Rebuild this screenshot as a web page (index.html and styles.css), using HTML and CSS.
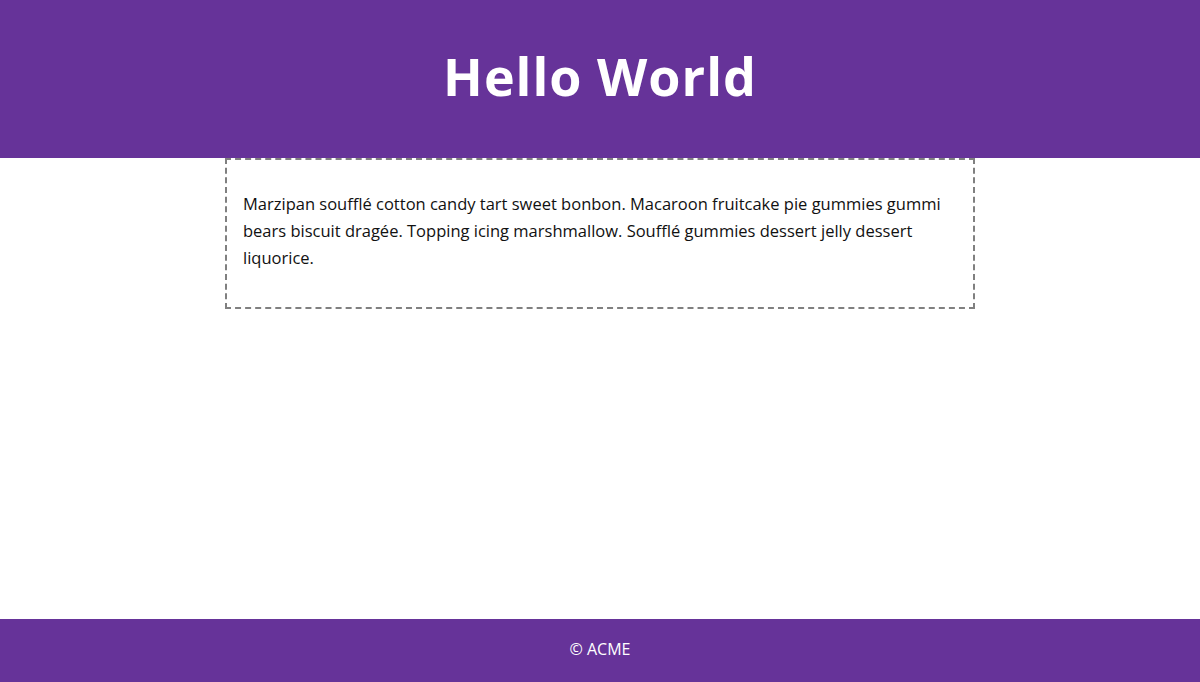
FILE: index.html
```html
<!DOCTYPE html>
<html lang="en">
<head>
<meta charset="utf-8">
<title>Hello World</title>
<link rel="stylesheet" href="styles.css">
</head>
<body>
<div class="page">
  <header class="site-header">
    <h1 class="title">Hello World</h1>
  </header>
  <main class="main">
    <div class="card">
      <p class="text">Marzipan soufflé cotton candy tart sweet bonbon. Macaroon fruitcake pie gummies gummi bears biscuit dragée. Topping icing marshmallow. Soufflé gummies dessert jelly dessert liquorice.</p>
    </div>
  </main>
  <footer class="site-footer">© ACME</footer>
</div>
</body>
</html>
```
FILE: styles.css
```css
html, body {
  margin: 0;
  padding: 0;
  height: 100%;
}
body {
  font-family: "Open Sans", "Liberation Sans", sans-serif;
  background: #ffffff;
  color: #111;
}
.page {
  min-height: 100%;
  display: flex;
  flex-direction: column;
}
.site-header {
  background: #663399;
  height: 158px;
  display: flex;
  align-items: center;
  justify-content: center;
}
.title {
  margin: 0;
  color: #fff;
  font-family: "Open Sans", sans-serif;
  font-weight: 700;
  font-size: 52px;
  letter-spacing: 1px;
  line-height: 1;
  padding-bottom: 6px;
}
.main {
  flex: 1;
  display: flex;
  justify-content: center;
}
.card {
  width: 750px;
  box-sizing: border-box;
  border: 2px dashed #808080;
  padding: 16px 16px;
  align-self: flex-start;
}
.text {
  margin: 14px 0 20px;
  font-size: 16.5px;
  line-height: 27px;
  color: #111;
}
.site-footer {
  background: #663399;
  color: #fff;
  height: 63px;
  display: flex;
  align-items: center;
  justify-content: center;
  font-size: 16px;
  font-family: "Open Sans", sans-serif;
  padding-bottom: 3px;
  box-sizing: border-box;
}
```
